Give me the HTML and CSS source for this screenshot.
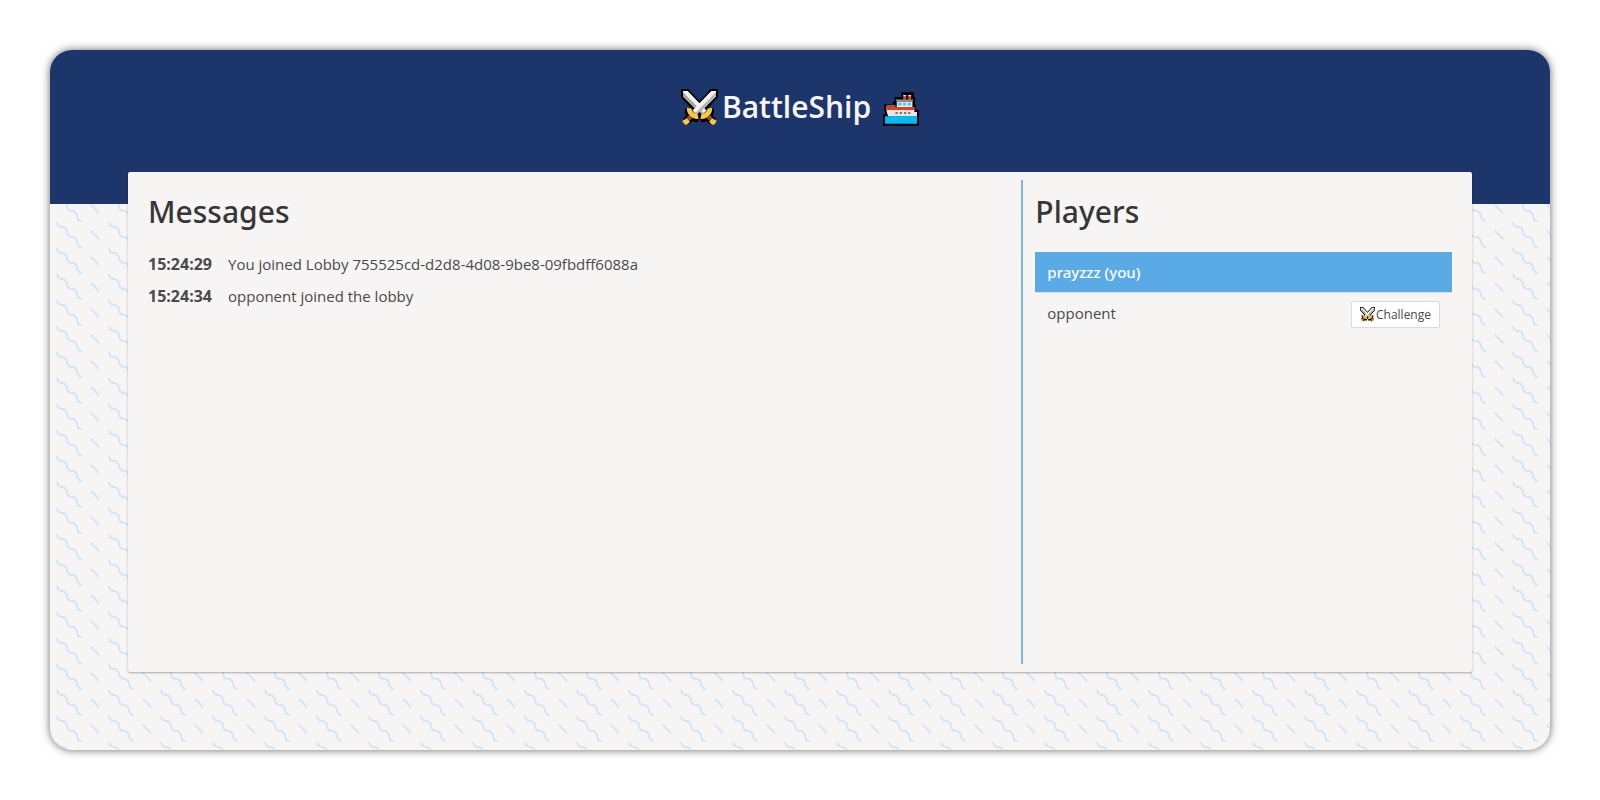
FILE: index.html
```html
<!DOCTYPE html>
<html lang="en">
<head>
<meta charset="utf-8">
<title>BattleShip</title>
<link rel="stylesheet" href="styles.css">
</head>
<body>
<svg class="symbols" aria-hidden="true">
  <symbol id="swords" viewBox="0 0 110 110">
    <g stroke="#000" stroke-width="12" stroke-linejoin="miter" fill="#000">
      <path d="M6 6H20L74 66L62 76L50 70L6 22Z"/>
      <path d="M104 6H90L36 66L48 76L60 70L104 22Z"/>
      <path d="M24 60Q21 84 52 87M86 60Q89 84 58 87M36 76L15 97M74 76L95 97" fill="none" stroke-width="24"/>
    </g>
    <path d="M6 6H20L76 64L62 78L6 22Z" fill="#f2f2f2"/>
    <path d="M6 10L68 72L62 78L6 22Z" fill="#a6a6a6"/>
    <path d="M104 6H90L34 64L48 78L104 22Z" fill="#f2f2f2"/>
    <path d="M104 10V22L48 78L42 72Z" fill="#b3b3b3"/>
    <g fill="none">
      <path d="M34 77L18 93M76 77L92 93" stroke="#8e562e" stroke-width="13"/>
      <path d="M25 57Q23 66 32 74Q40 83 52 82M85 57Q87 66 78 74Q70 83 58 82" stroke="#ffc83d" stroke-width="14"/>
      <path d="M8 96L17 92L22 98L14 103ZM102 96L93 92L88 98L96 103Z" fill="#ffc83d" stroke="#ffc83d" stroke-width="7" stroke-linejoin="round"/>
    </g>
    <path d="M49 75L55 68L61 75L57 90H53Z" fill="#111"/>
  </symbol>
  <symbol id="ship" viewBox="0 0 110 102">
    <path d="M0 102V68H8L4 54V36H30V28H36V14H56V0H94V14H98V38H100V54H110V102Z" fill="#000"/>
    <path d="M62 8h9v14h-9zM77 8h9v14h-9z" fill="#f03a17"/>
    <path d="M62 8h9v4h-9zM77 8h9v4h-9z" fill="#ddd"/>
    <path d="M42 28H90V46H42z" fill="#f2f2f2"/>
    <path d="M40 22H92V27H40z" fill="#999"/>
    <path d="M45 32h12v8H45zM61 32h10v8H61zM75 32h11v8H75z" fill="#31d2f7"/>
    <path d="M10 38H38V46H10z" fill="#666"/>
    <path d="M10 46H96V60H104V74H16Q10 64 10 46Z" fill="#e6e6e6"/>
    <path d="M10 45H96V54H10z" fill="#f03a17"/>
    <path d="M38 60h7v6h-7zM51 60h7v6h-7zM64 60h7v6h-7zM77 60h7v6h-7z" fill="#777"/>
    <path d="M6 73H104V96H6z" fill="#00bcf2"/>
  </symbol>
</svg>
<div class="app">
  <header class="hero">
    <h1 class="title"><svg class="title-swords" aria-hidden="true"><use href="#swords"/></svg>BattleShip<svg class="title-ship" aria-hidden="true"><use href="#ship"/></svg></h1>
  </header>
  <main class="lobby">
    <section class="messages">
      <h2 class="heading">Messages</h2>
      <ul class="log">
        <li class="entry"><time class="time">15:24:29</time><span>You joined Lobby 755525cd-d2d8-4d08-9be8-09fbdff6088a</span></li>
        <li class="entry"><time class="time">15:24:34</time><span>opponent joined the lobby</span></li>
      </ul>
    </section>
    <section class="players">
      <h2 class="heading">Players</h2>
      <ul class="roster">
        <li class="player player-self">prayzzz (you)</li>
        <li class="player"><span>opponent</span><button class="challenge" type="button"><svg class="challenge-icon" aria-hidden="true"><use href="#swords"/></svg>Challenge</button></li>
      </ul>
    </section>
  </main>
</div>
</body>
</html>
```
FILE: styles.css
```css
* {
  box-sizing: border-box;
}

body {
  margin: 0;
  padding: 50px;
  min-height: 100vh;
  display: flex;
  background: #fff;
  color: #4a4a4a;
  font: 15px/24px "Open Sans", "Noto Sans", sans-serif;
}

h1, h2, ul {
  margin: 0;
  padding: 0;
}

ul {
  list-style: none;
}

.symbols {
  position: absolute;
  width: 0;
  height: 0;
}

.app {
  flex: 1;
  display: flex;
  flex-direction: column;
  border-radius: 22px;
  overflow: hidden;
  background: #f6f5f4 url("data:image/svg+xml,%3Csvg xmlns='http://www.w3.org/2000/svg' width='52' height='26' viewBox='0 0 52 26'%3E%3Cpath fill='%23d1e6f6' d='M10 10c0-2.21-1.79-4-4-4-3.314 0-6-2.686-6-6h2c0 2.21 1.79 4 4 4 3.314 0 6 2.686 6 6 0 2.21 1.79 4 4 4 3.314 0 6 2.686 6 6 0 2.21 1.79 4 4 4v2c-3.314 0-6-2.686-6-6 0-2.21-1.79-4-4-4-3.314 0-6-2.686-6-6zm25.464-1.95l8.486 8.486-1.414 1.414-8.486-8.486 1.414-1.414z'/%3E%3C/svg%3E") 6px 16px;
  box-shadow: 0 0 8px rgba(0, 0, 0, 0.6);
}

.hero {
  height: 154px;
  padding-top: 38px;
  background: #1c356b;
  color: #f6f5f4;
}

.title {
  display: flex;
  justify-content: center;
  align-items: flex-end;
  font-size: 30px;
  line-height: 38px;
  font-weight: 600;
}

.title-swords {
  width: 37px;
  height: 37px;
  margin-right: 4px;
}

.title-ship {
  width: 36px;
  height: 34px;
  margin-left: 12px;
}

.lobby {
  flex: 1;
  display: grid;
  grid-template-columns: 2fr 1fr;
  margin: -32px 78px 78px;
  padding: 8px;
  border-radius: 2px;
  background: #f6f5f4;
  box-shadow: 0 1px 2px rgba(0, 0, 0, 0.3);
}

.messages {
  padding: 12px;
}

.players {
  padding: 12px;
  border-left: 2px solid #7ab8e4;
}

.heading {
  margin-bottom: 20px;
  color: #363636;
  font-family: "Noto Sans", "Open Sans", sans-serif;
  font-size: 30px;
  line-height: 40px;
  font-weight: 500;
}

.entry {
  display: flex;
  gap: 16px;
  margin-bottom: 8px;
}

.time {
  width: 64px;
  font-size: 16px;
  font-weight: 700;
}

.player {
  display: flex;
  justify-content: space-between;
  align-items: flex-start;
  padding: 8px 12px;
  min-height: 41px;
}

.player-self {
  border-bottom: 1px solid #dbdbdb;
  background: #5aaae6;
  color: #fff;
  font-family: "Noto Sans", "Open Sans", sans-serif;
  font-weight: 500;
}

.challenge {
  display: flex;
  align-items: center;
  gap: 1px;
  height: 27px;
  padding: 0 8px;
  border: 1px solid #dbdbdb;
  border-radius: 2px;
  background: #fff;
  color: #4a4a4a;
  font: inherit;
  font-size: 12px;
}

.challenge-icon {
  width: 15px;
  height: 15px;
}
```
